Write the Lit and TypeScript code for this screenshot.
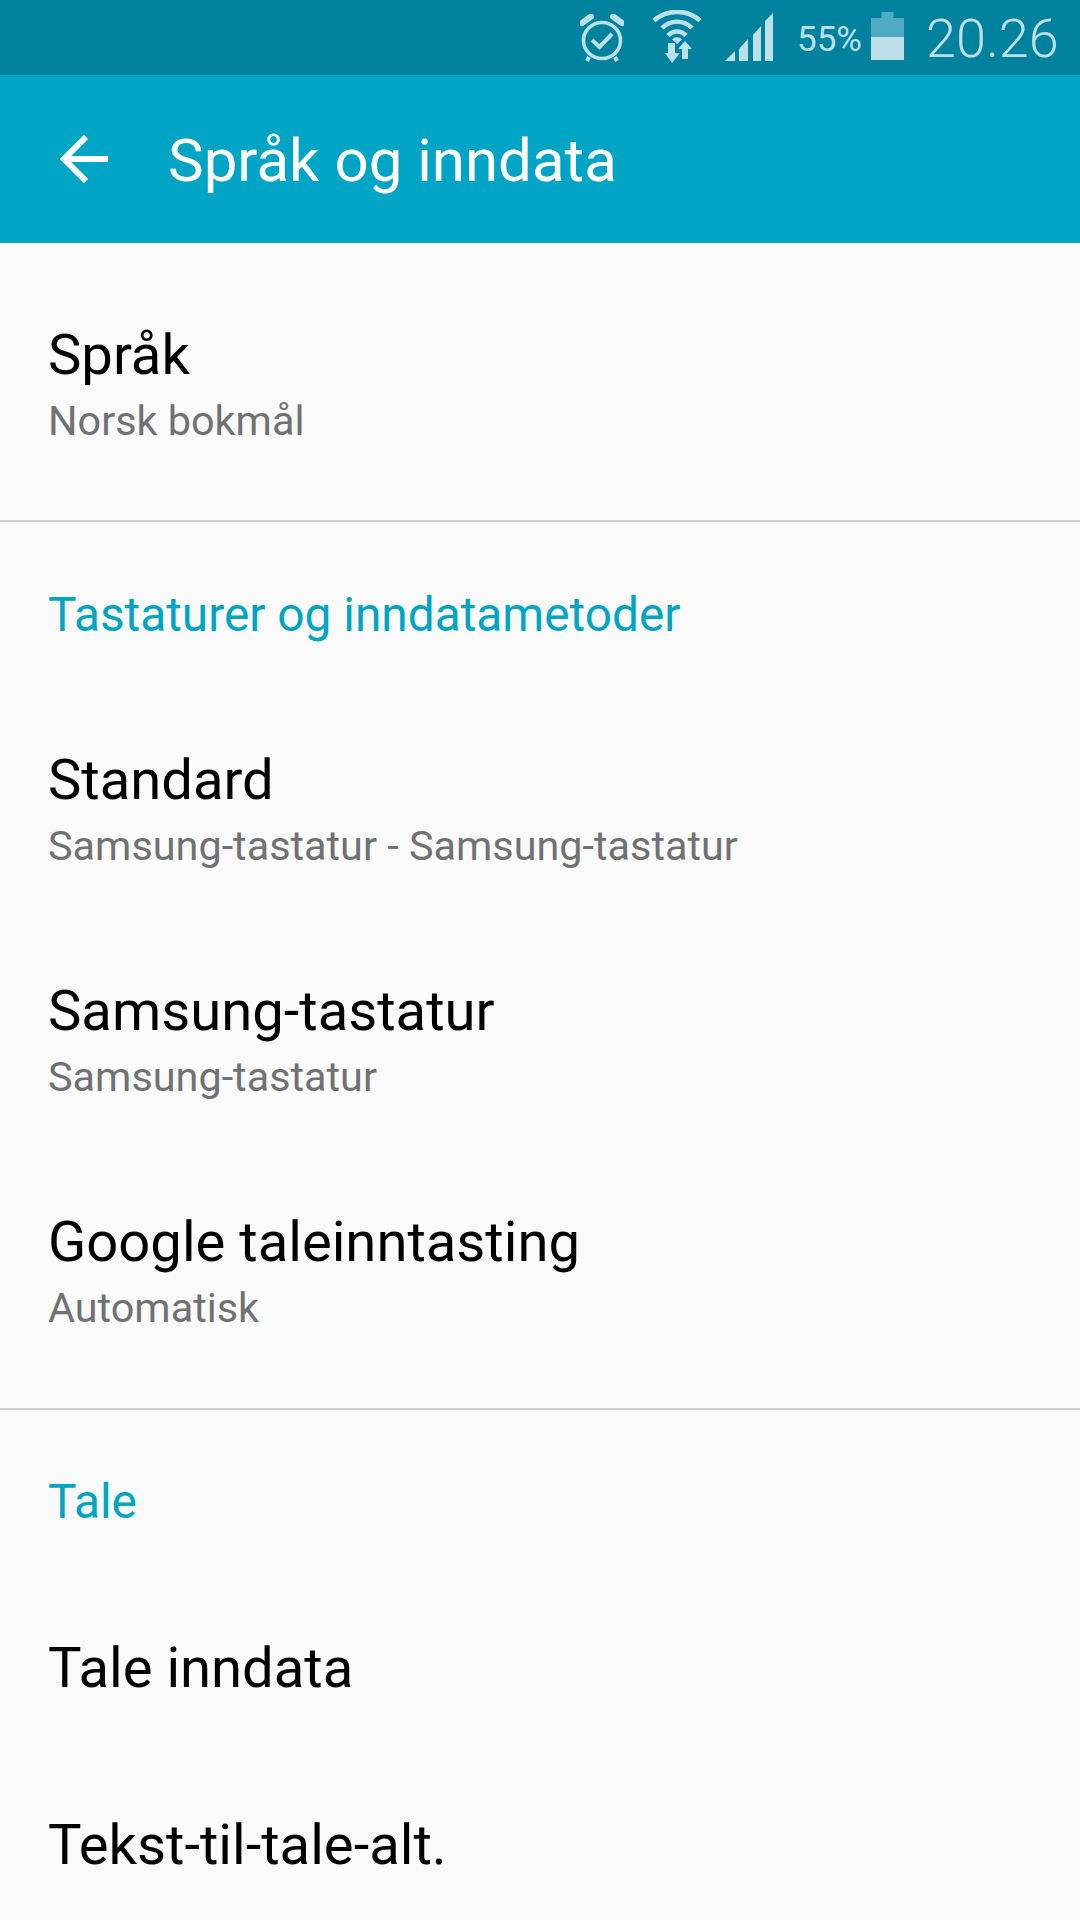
import { LitElement, html, css } from "lit";
import { customElement } from "lit/decorators.js";

@customElement("app-root")
export class AppRoot extends LitElement {
  static styles = css`
    :host { display: block; width: 1080px; height: 1920px; overflow: hidden; background: #fafafa; font-family: Roboto, sans-serif; }
    .status { height: 75px; background: #00829f; display: flex; align-items: flex-start; padding-left: 580px; color: #bde0e8; box-sizing: border-box; }
    .status svg { display: block; flex: none; }
    .alarm { margin-top: 14px; }
    .wifi { margin-top: 10px; margin-left: 28px; }
    .signal { margin-top: 13px; margin-left: 23px; }
    .pct { font-size: 35px; line-height: 39px; margin-top: 20px; margin-left: 24px; width: 74px; flex: none; }
    .battery { margin-top: 12px; }
    .time { font-size: 54px; line-height: 60px; margin-top: 9px; margin-left: 22px; font-weight: 300; flex: none; }
    .bar { height: 168px; background: #00a5c5; display: flex; align-items: center; color: #fff; }
    .back { margin-left: 60px; flex: none; }
    .title { font-size: 60px; margin-left: 60px; position: relative; top: 1px; }
    .item { padding-left: 48px; box-sizing: border-box; }
    .first { height: 277px; padding-top: 80px; }
    .row { height: 231px; padding-top: 68px; }
    .plain { height: 177px; display: flex; align-items: center; }
    .main { font-size: 56.2px; color: #000; line-height: 64px; }
    .sub { font-size: 41.4px; color: #6f7173; line-height: 50px; margin-top: 9px; }
    .head { font-size: 47.8px; color: #00a5c5; padding: 63px 0 35px 48px; line-height: 60px; }
    .tale { padding-top: 62px; padding-bottom: 47px; }
    .group { padding-bottom: 35px; }
    hr { border: 0; height: 2px; background: #cfd0d1; margin: 0; }
  `;
  render() {
    return html`
      <div class="status">
        <svg class="alarm" width="44" height="48" viewBox="0 0 44 48" fill="none" stroke="#bde0e8">
          <ellipse cx="22" cy="26.5" rx="18.5" ry="18" stroke-width="3.6"/>
          <path d="M12 26l7.5 7L32 20" stroke-width="4"/>
          <path d="M2 9l9-6.5M42 9l-9-6.5" stroke-width="6" stroke-linecap="round"/>
          <path d="M9 43l-2 4M35 43l2 4" stroke-width="4"/>
        </svg>
        <svg class="wifi" width="50" height="54" viewBox="0 0 50 54" fill="none" stroke="#bde0e8" stroke-width="4.5">
          <path d="M2 10.500C15-1 35-1 48 10.500M10 18C18 9.500 32 9.500 40 18M16 25.500C21 20 29 20 34 25.500"/>
          <path d="M20 29.500C23 26.500 27 26.500 30 29.500L25 34z" fill="#bde0e8" stroke="none"/>
          <path d="M16 33h7v10h5L20 53 13 43h3zM33 31l7 8h-4v10h-6V39h-4z" fill="#bde0e8" stroke="none"/>
        </svg>
        <svg class="signal" width="48" height="48" viewBox="0 0 48 48" fill="#bde0e8">
          <path d="M0 48l10-10v10zM14 36l9-10v22h-9zM28 22l8-9v35h-8zM40 8l8-8v48h-8z"/>
        </svg>
        <span class="pct">55%</span>
        <svg class="battery" width="33" height="48" viewBox="0 0 33 48">
          <path d="M10.500 0h12v6H33v19H0V6h10.500z" fill="#4fabc1"/>
          <path d="M0 25h33v23H0z" fill="#bde0e8"/>
        </svg>
        <span class="time">20.26</span>
      </div>
      <div class="bar">
        <svg class="back" width="48" height="48" viewBox="0 0 48 48" fill="none" stroke="#fff" stroke-width="6">
          <path d="M48 24H5M26 2L4 24l22 22"/>
        </svg>
        <span class="title">Språk og inndata</span>
      </div>
      <div class="item first"><div class="main">Språk</div><div class="sub">Norsk bokmål</div></div>
      <hr />
      <div class="head">Tastaturer og inndatametoder</div>
      <div class="group">
        <div class="item row"><div class="main">Standard</div><div class="sub">Samsung-tastatur - Samsung-tastatur</div></div>
        <div class="item row"><div class="main">Samsung-tastatur</div><div class="sub">Samsung-tastatur</div></div>
        <div class="item row"><div class="main">Google taleinntasting</div><div class="sub">Automatisk</div></div>
      </div>
      <hr />
      <div class="head tale">Tale</div>
      <div class="item plain"><div class="main">Tale inndata</div></div>
      <div class="item plain"><div class="main">Tekst-til-tale-alt.</div></div>
    `;
  }
}
